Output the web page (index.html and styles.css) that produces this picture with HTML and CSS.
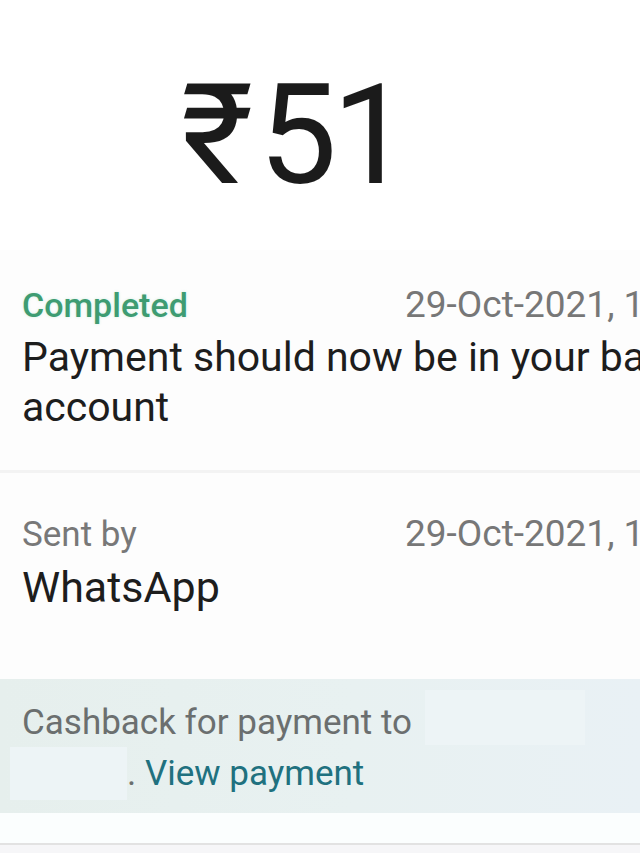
FILE: index.html
```html
<!DOCTYPE html>
<html>
<head>
<meta charset="utf-8">
<link rel="stylesheet" href="styles.css">
</head>
<body>
<div class="page">
  <div class="amount"><span class="rupee">₹</span>51</div>
  <section class="row row-status">
    <div class="line">
      <span class="status">Completed</span>
      <span class="date">29-Oct-2021, 11:42 am</span>
    </div>
    <div class="main main-status">Payment should now be in your bank<br>account</div>
  </section>
  <section class="row row-sender">
    <div class="line">
      <span class="label">Sent by</span>
      <span class="date">29-Oct-2021, 11:42 am</span>
    </div>
    <div class="main main-sender">WhatsApp</div>
  </section>
  <section class="cashback">
    <div class="cb-text">Cashback for payment to<br><span class="indent"></span>. <span class="link">View payment</span></div>
    <span class="blur blur-a"></span>
    <span class="blur blur-b"></span>
  </section>
  <div class="gap"></div>
  <div class="footer"></div>
</div>
</body>
</html>
```
FILE: styles.css
```css
html, body {
  margin: 0;
  padding: 0;
  background: #ffffff;
}
body {
  width: 640px;
  height: 853px;
  overflow: hidden;
  font-family: Roboto, "Noto Sans", sans-serif;
}
.page {
  width: 640px;
}
.amount {
  height: 250px;
  box-sizing: border-box;
  padding: 65px 0 0 181px;
  font-size: 140px;
  line-height: 140px;
  color: #1b1b1b;
  white-space: nowrap;
  letter-spacing: -5px;
}
.rupee {
  margin-right: 10px;
}
.row {
  background: #fdfdfd;
  padding-left: 22px;
  white-space: nowrap;
  overflow: hidden;
  box-sizing: border-box;
}
.row-status {
  padding-top: 35px;
  height: 223px;
  border-bottom: 3px solid #f3f3f3;
}
.row-sender {
  padding-top: 41px;
  height: 206px;
}
.line {
  display: flex;
  align-items: baseline;
}
.line span {
  line-height: 40px;
}
.status {
  color: #3e9c72;
  font-weight: 500;
  font-size: 34px;
  width: 383px;
  flex: none;
  text-shadow: 0 0 3px rgba(80, 190, 140, 0.25);
}
.label {
  color: #787878;
  font-size: 35px;
  width: 383px;
  flex: none;
}
.date {
  color: #777777;
  font-size: 37px;
  flex: none;
}
.main {
  color: #1d1d1d;
  line-height: 50px;
}
.main-status {
  font-size: 41px;
  margin-top: 7px;
}
.main-sender {
  font-size: 43px;
  margin-top: 7px;
}
.cashback {
  position: relative;
  background: linear-gradient(90deg, #e6efed 0%, #e8f1f1 55%, #e9f1f5 100%);
  height: 134px;
  box-sizing: border-box;
  padding: 18px 0 0 22px;
}
.cb-text {
  color: #6b6f6f;
  font-size: 35px;
  line-height: 51px;
  white-space: nowrap;
}
.indent {
  display: inline-block;
  width: 105px;
}
.link {
  color: #20717f;
}
.blur {
  position: absolute;
  background: #edf4f6;
}
.blur-a {
  left: 425px;
  top: 11px;
  width: 160px;
  height: 55px;
}
.blur-b {
  left: 10px;
  top: 68px;
  width: 117px;
  height: 53px;
}
.gap {
  height: 30px;
  background: #fbfefe;
}
.footer {
  height: 40px;
  border-top: 2px solid #e2e2e2;
  background: #f6f6f8;
}
```
